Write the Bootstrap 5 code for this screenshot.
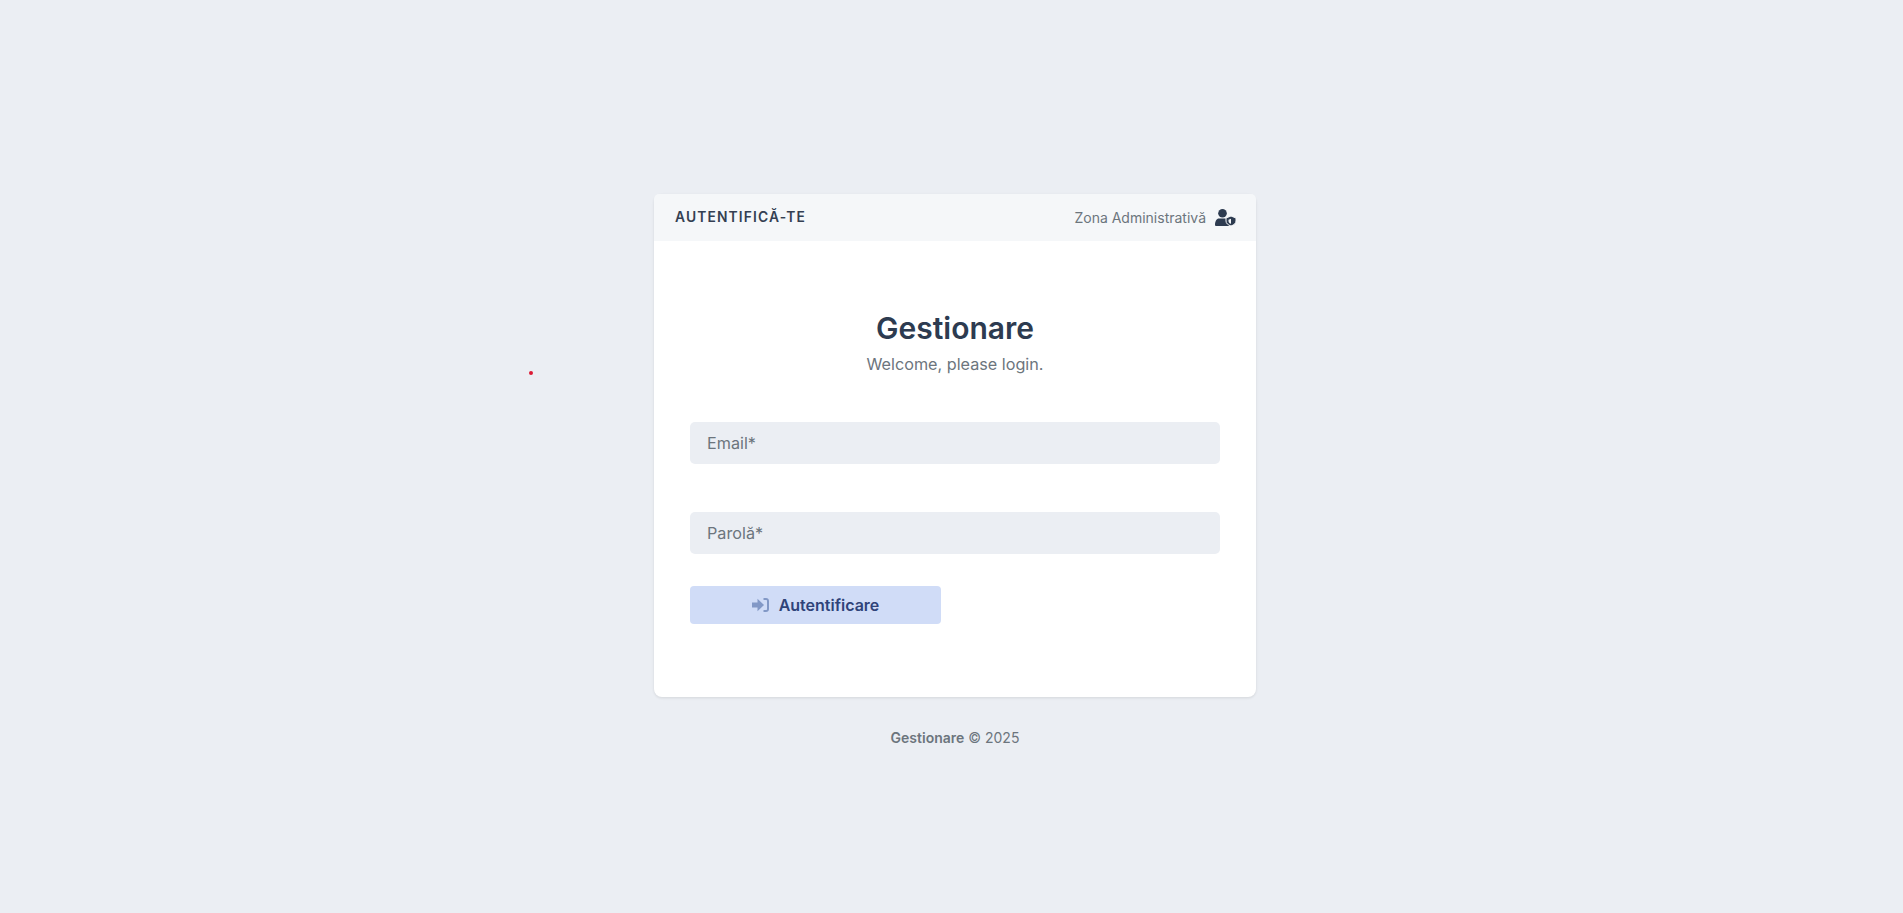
<!DOCTYPE html>
<html lang="en">
  <head>
    <meta charset="UTF-8" />
    <meta name="viewport" content="width=device-width, initial-scale=1.0" />
    <title>Gestionare</title>
    <link href="https://cdn.jsdelivr.net/npm/bootstrap@5.3.6/dist/css/bootstrap.min.css" rel="stylesheet" />
    <style>
      body {
        background: #ebeef3;
        font-family: Inter, "Liberation Sans", sans-serif;
        color: #6c757d;
      }
      .login-page { padding: 194px 0 0 7px; }
      .login-box { width: 602px; }
      .login-card {
        border: 0;
        border-radius: 8px;
        box-shadow: 0 1px 3px rgba(0, 0, 0, .1);
      }
      .login-head {
        height: 47px;
        padding: 0 20px 0 21px;
        background: #f5f7f9;
        border: 0;
        border-radius: 8px 8px 0 0;
      }
      .login-head-title {
        font-size: 13.8px;
        font-weight: 600;
        letter-spacing: 1.15px;
        color: #343f52;
      }
      .login-head-note { font-size: 14px; color: #6c757d; gap: 9px; }
      .login-body { padding: 69px 36px 73px; }
      .login-title {
        font-size: 30px;
        line-height: 36px;
        font-weight: 600;
        color: #2d3b50;
        margin: 0 0 8px;
      }
      .login-sub { font-size: 16.2px; line-height: 20px; margin-bottom: 48px; }
      .login-field {
        height: 42px;
        background: #ebeef3;
        border: 0;
        border-radius: 5px;
        padding: 0 17px;
        font-size: 16.2px;
        color: #2d3b50;
        margin-bottom: 48px;
      }
      .login-field::placeholder { color: #6c757d; opacity: 1; }
      .login-field-last { margin-bottom: 32px; }
      .login-btn {
        width: 251px;
        height: 38px;
        background: #d0dcf7;
        border: 0;
        border-radius: 4px;
        color: #2f4379;
        font-size: 16px;
        font-weight: 600;
        gap: 10px;
      }
      .login-foot { margin-top: 31px; font-size: 14px; line-height: 20px; }
      .red-dot {
        position: absolute;
        left: 529px;
        top: 371px;
        width: 4px;
        height: 4px;
        border-radius: 50%;
        background: #dc1a35;
      }
    </style>
    <script src="https://cdn.jsdelivr.net/npm/bootstrap@5.3.6/dist/js/bootstrap.bundle.min.js"></script>
  </head>
  <body>
    <div class="red-dot"></div>
    <div class="login-page d-flex flex-column align-items-center">
      <div class="login-box">
        <div class="card login-card">
          <div class="card-header login-head d-flex align-items-center justify-content-between">
            <span class="login-head-title">AUTENTIFICĂ-TE</span>
            <span class="login-head-note d-flex align-items-center">
              Zona Administrativă
              <svg width="21" height="17" viewBox="0 0 21 17" fill="#2d3b50">
                <circle cx="7.500" cy="4.300" r="4.300" />
                <path d="M4 9.600h7c2.600 0 4.500 2.500 4.500 5.600V17H1.300C.5 17 0 16.500 0 15.700 0 12.300 1.700 9.600 4 9.600z" />
                <path d="M16 7l5 2v3c0 2.300-1.900 4-5 5-3.100-1-5-2.700-5-5V9z" stroke="#f5f7f9" />
                <path d="M16 9.800v5c-1.500-.6-2.500-1.600-2.500-2.900v-1.100z" fill="#f5f7f9" />
              </svg>
            </span>
          </div>
          <div class="card-body login-body">
            <h1 class="login-title text-center">Gestionare</h1>
            <p class="login-sub text-center">Welcome, please login.</p>
            <form>
              <input type="text" class="form-control login-field" placeholder="Email*" />
              <input type="password" class="form-control login-field login-field-last" placeholder="Parolă*" />
              <button type="button" class="btn login-btn d-flex align-items-center justify-content-center">
                <svg width="17" height="14" viewBox="0 0 17 14" fill="#8298c6">
                  <path d="M0 4.500h5.500V.8L12 7l-6.500 6.200V9.500H0z" />
                  <path d="M11.500 0h2.500C15.800 0 17 1.200 17 3v8c0 1.800-1.200 3-3 3h-2.500v-2H14c.7 0 1-.4 1-1V3c0-.6-.3-1-1-1h-2.500z" />
                </svg>
                Autentificare
              </button>
            </form>
          </div>
        </div>
        <div class="login-foot text-center"><strong class="fw-semibold">Gestionare</strong> © 2025</div>
      </div>
    </div>
  </body>
</html>
